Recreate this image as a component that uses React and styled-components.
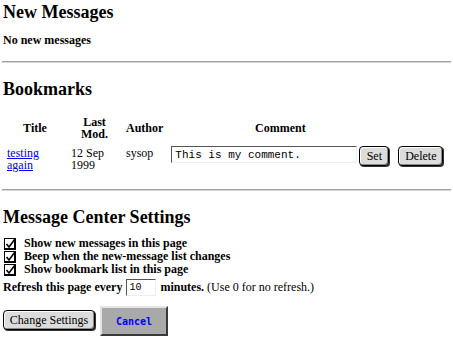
import React from "react";
import styled, { createGlobalStyle } from "styled-components";

const Global = createGlobalStyle`
  html, body { margin: 0; padding: 0; background: #fff; }
  body { font-family: "Liberation Serif", "Times New Roman", serif; color: #000; }
`;

const Page = styled.div`
  padding: 0 3px;
  font-size: 12px;
  line-height: 13px;
`;

const Heading = styled.h2`
  font-size: 18px;
  line-height: 20px;
  font-weight: bold;
  margin: ${(p) => p.$mt || 0}px 0 0 0;
`;

const Note = styled.div`
  font-weight: bold;
  margin-top: 12px;
`;

const Rule = styled.hr`
  margin: ${(p) => p.$mt}px -1px 0 -1px;
  height: 0;
  border: none;
  border-top: 1px solid #a0a0a0;
  border-bottom: 1px solid #d8d8d8;
`;

const Table = styled.table`
  border-collapse: collapse;
  border-spacing: 0;
  table-layout: fixed;
  margin-top: 17px;
`;

const Th = styled.th`
  font-weight: bold;
  text-align: center;
  vertical-align: middle;
  padding: 0 4px 6px 4px;
  line-height: 12px;
  width: ${(p) => p.$w}px;
  box-sizing: border-box;
`;

const Td = styled.td`
  vertical-align: top;
  padding: 0 0 0 ${(p) => p.$pl ?? 4}px;
  line-height: 12px;
  box-sizing: border-box;
`;

const CellText = styled.div`
  padding-top: 1px;
`;

const Link = styled.a`
  color: #0000ee;
  text-decoration: underline;
`;

const CommentCell = styled.div`
  display: flex;
  align-items: flex-start;
  gap: 2px;
`;

const TextInput = styled.input`
  box-sizing: border-box;
  width: ${(p) => p.$w}px;
  height: 17px;
  font-family: "Liberation Mono", "Courier New", monospace;
  font-size: 11px;
  padding: 0 3px;
  margin: 0;
  border-top: 1px solid #555;
  border-left: 1px solid #555;
  border-right: 1px solid #eee;
  border-bottom: 1px solid #eee;
  background: #fff;
  color: #000;
  outline: none;
`;

const MacButton = styled.button`
  box-sizing: border-box;
  height: 20px;
  width: ${(p) => p.$w}px;
  margin-top: ${(p) => p.$mt || 0}px;
  padding: 0;
  font-family: "Liberation Serif", "Times New Roman", serif;
  font-size: 12px;
  background: #dcdcdc;
  color: #000;
  border: 1px solid #000;
  border-radius: 4px;
  box-shadow: inset 1px 1px 0 #fff, inset -1px -1px 0 #8a8a8a, 1px 1px 0 #333;
  cursor: default;
`;

const CheckList = styled.div`
  margin-top: 10px;
  display: flex;
  flex-direction: column;
`;

const CheckRow = styled.label`
  display: flex;
  align-items: center;
  gap: 8px;
  font-weight: bold;
  height: 13px;
  padding-left: 1px;
`;

const Box = styled.span`
  width: 12px;
  height: 12px;
  display: inline-flex;
  flex-shrink: 0;
`;

const RefreshRow = styled.div`
  display: flex;
  align-items: center;
  margin-top: 3px;
  white-space: nowrap;
`;

const Bold = styled.span`
  font-weight: bold;
`;

const SmallInput = styled(TextInput)`
  height: 17px;
  margin: 0 4px 0 4px;
  font-size: 10px;
  padding: 0 2px;
`;

const ButtonRow = styled.div`
  display: flex;
  align-items: flex-start;
  gap: 5px;
  margin-top: 10px;
`;

const CancelButton = styled.button`
  box-sizing: border-box;
  width: 68px;
  height: 30px;
  padding: 0;
  background: #a9a9a9;
  color: #0000ff;
  font-family: "DejaVu Sans Mono", "Liberation Mono", monospace;
  font-weight: bold;
  font-size: 10px;
  border-top: 2px solid #e4e4e4;
  border-left: 2px solid #e4e4e4;
  border-right: 2px solid #3a3a3a;
  border-bottom: 2px solid #3a3a3a;
  cursor: default;
`;

function Check() {
  return (
    <Box>
      <svg width="12" height="12" viewBox="0 0 12 12">
        <rect x="0.5" y="0.5" width="11" height="11" fill="#fff" stroke="#000" />
        <rect x="1" y="10" width="11" height="2" fill="#000" />
        <rect x="10" y="1" width="2" height="11" fill="#000" />
        <path d="M2.5 6 L5 9 L11 1" fill="none" stroke="#000" strokeWidth="1.6" />
      </svg>
    </Box>
  );
}

export default function App() {
  return (
    <>
      <Global />
      <Page>
        <Heading $mt={2}>New Messages</Heading>
        <Note>No new messages</Note>
        <Rule $mt={14} />
        <Heading $mt={16}>Bookmarks</Heading>
        <Table>
          <colgroup>
            <col style={{ width: 64 }} />
            <col style={{ width: 55 }} />
            <col style={{ width: 45 }} />
            <col style={{ width: 226 }} />
            <col style={{ width: 55 }} />
          </colgroup>
          <thead>
            <tr>
              <Th $w={64}>Title</Th>
              <Th $w={55}>
                Last
                <br />
                Mod.
              </Th>
              <Th $w={45}>Author</Th>
              <Th $w={226}>Comment</Th>
              <Th $w={55}></Th>
            </tr>
          </thead>
          <tbody>
            <tr>
              <Td>
                <CellText>
                  <Link href="#">
                    testing
                    <br />
                    again
                  </Link>
                </CellText>
              </Td>
              <Td>
                <CellText>
                  12 Sep
                  <br />
                  1999
                </CellText>
              </Td>
              <Td>
                <CellText>sysop</CellText>
              </Td>
              <Td>
                <CommentCell>
                  <TextInput $w={186} defaultValue="This is my comment." />
                  <MacButton $w={30}>Set</MacButton>
                </CommentCell>
              </Td>
              <Td $pl={5}>
                <MacButton $w={45}>Delete</MacButton>
              </Td>
            </tr>
          </tbody>
        </Table>
        <Rule $mt={18} />
        <Heading $mt={16}>Message Center Settings</Heading>
        <CheckList>
          <CheckRow>
            <Check />
            Show new messages in this page
          </CheckRow>
          <CheckRow>
            <Check />
            Beep when the new-message list changes
          </CheckRow>
          <CheckRow>
            <Check />
            Show bookmark list in this page
          </CheckRow>
        </CheckList>
        <RefreshRow>
          <Bold>Refresh this page every</Bold>
          <SmallInput $w={30} defaultValue="10" />
          <Bold>minutes.</Bold>&nbsp;(Use 0 for no refresh.)
        </RefreshRow>
        <ButtonRow>
          <MacButton $w={92} $mt={4}>
            Change Settings
          </MacButton>
          <CancelButton>Cancel</CancelButton>
        </ButtonRow>
      </Page>
    </>
  );
}
